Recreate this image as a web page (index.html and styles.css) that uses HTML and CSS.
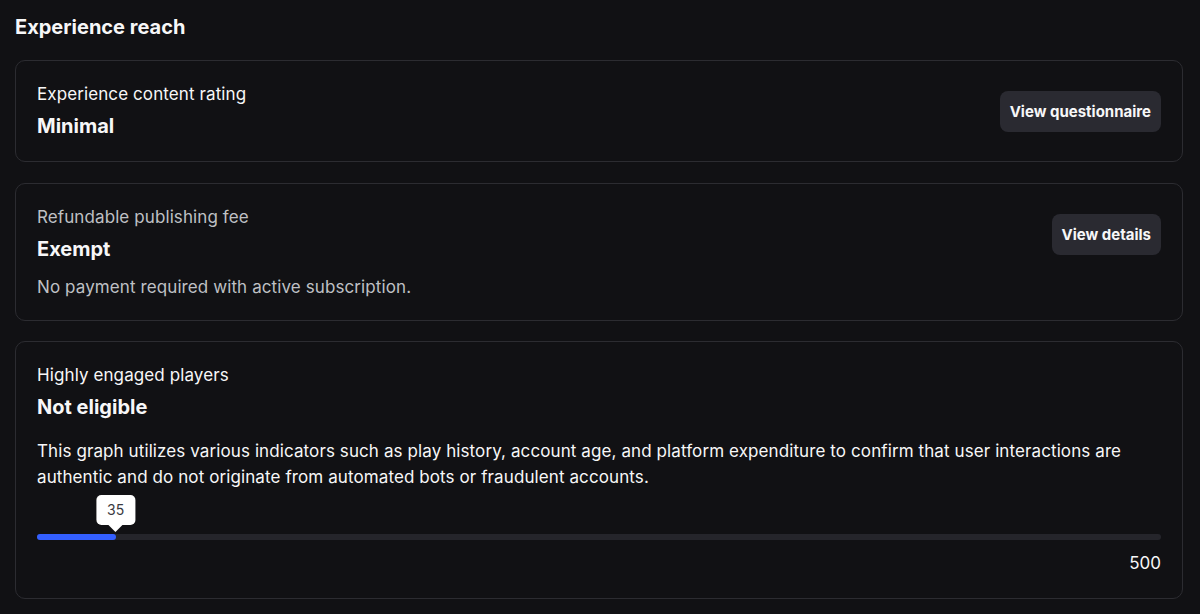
FILE: index.html
```html
<!DOCTYPE html>
<html>
<head>
    <title>Experience reach</title>
    <meta name="viewport" content="width=device-width, initial-scale=1.0">
    <link rel="stylesheet" href="styles.css">
</head>
<body>
    <div class="section">
        <h2>Experience reach</h2>

        <div class="card">
            <div class="card-text">
                <div class="label">Experience content rating</div>
                <div class="value">Minimal</div>
            </div>
            <button class="btn">View questionnaire</button>
        </div>

        <div class="card muted">
            <div class="card-text">
                <div class="label">Refundable publishing fee</div>
                <div class="value">Exempt</div>
                <p class="desc">No payment required with active subscription.</p>
            </div>
            <button class="btn">View details</button>
        </div>

        <div class="card stacked">
            <div class="label">Highly engaged players</div>
            <div class="value">Not eligible</div>
            <p class="desc">This graph utilizes various indicators such as play history, account age, and platform expenditure to confirm that user interactions are authentic and do not originate from automated bots or fraudulent accounts.</p>

            <div class="meter">
                <div class="track">
                    <div class="fill" style="width: 7%"></div>
                    <div class="tip" style="left: 7%">35</div>
                </div>
                <div class="max">500</div>
            </div>
        </div>
    </div>
</body>
</html>
```

FILE: styles.css
```css
:root {
    --bg: #111114;
    --border: #2c2c31;
    --text: #f7f7f8;
    --muted: #bfc0c4;
    --btn: #2a2a31;
    --track: #25252b;
    --accent: #335fff;
}

* {
    margin: 0;
    padding: 0;
    box-sizing: border-box;
    font-family: 'Inter', 'Noto Sans', sans-serif;
}

body {
    background: var(--bg);
    color: var(--text);
    padding: 14px 17px 0 15px;
}

h2 {
    font-size: 20px;
    font-weight: 700;
    line-height: 26px;
    margin-bottom: 20px;
}

.card {
    border: 1px solid var(--border);
    border-radius: 10px;
    padding: 22px 21px 22px;
    display: flex;
    align-items: flex-start;
    justify-content: space-between;
    margin-bottom: 21px;
}

.card.muted {
    margin-bottom: 20px;
}

.card.stacked {
    display: block;
    padding-bottom: 24px;
}

.label {
    font-size: 17px;
    line-height: 22px;
    letter-spacing: 0.1px;
}

.value {
    font-size: 20px;
    font-weight: 700;
    line-height: 26px;
    margin-top: 8px;
}

.desc {
    font-size: 17px;
    line-height: 26px;
    letter-spacing: 0.1px;
    margin-top: 12px;
}

.muted .desc {
    margin-bottom: -2px;
}

.stacked .desc {
    margin-top: 18px;
}

.muted .label,
.muted .desc {
    color: var(--muted);
}

.btn {
    background: var(--btn);
    color: var(--text);
    border: none;
    border-radius: 8px;
    height: 41px;
    margin-top: 8px;
    padding: 0 10px;
    font-size: 15px;
    font-weight: 700;
    cursor: pointer;
}

.meter {
    margin-top: 44px;
}

.track {
    position: relative;
    height: 6px;
    border-radius: 3px;
    background: var(--track);
}

.fill {
    height: 100%;
    border-radius: 3px;
    background: var(--accent);
}

.tip {
    position: absolute;
    bottom: 15px;
    transform: translateX(-50%);
    background: #fff;
    color: #3a3a3f;
    font-size: 14px;
    line-height: 30px;
    padding: 0 11px;
    border-radius: 5px;
}

.tip::after {
    content: "";
    position: absolute;
    left: 50%;
    bottom: -7px;
    margin-left: -7px;
    border: 7px solid transparent;
    border-bottom: 0;
    border-top-color: #fff;
}

.max {
    text-align: right;
    font-size: 17px;
    line-height: 22px;
    margin-top: 12px;
}
```
